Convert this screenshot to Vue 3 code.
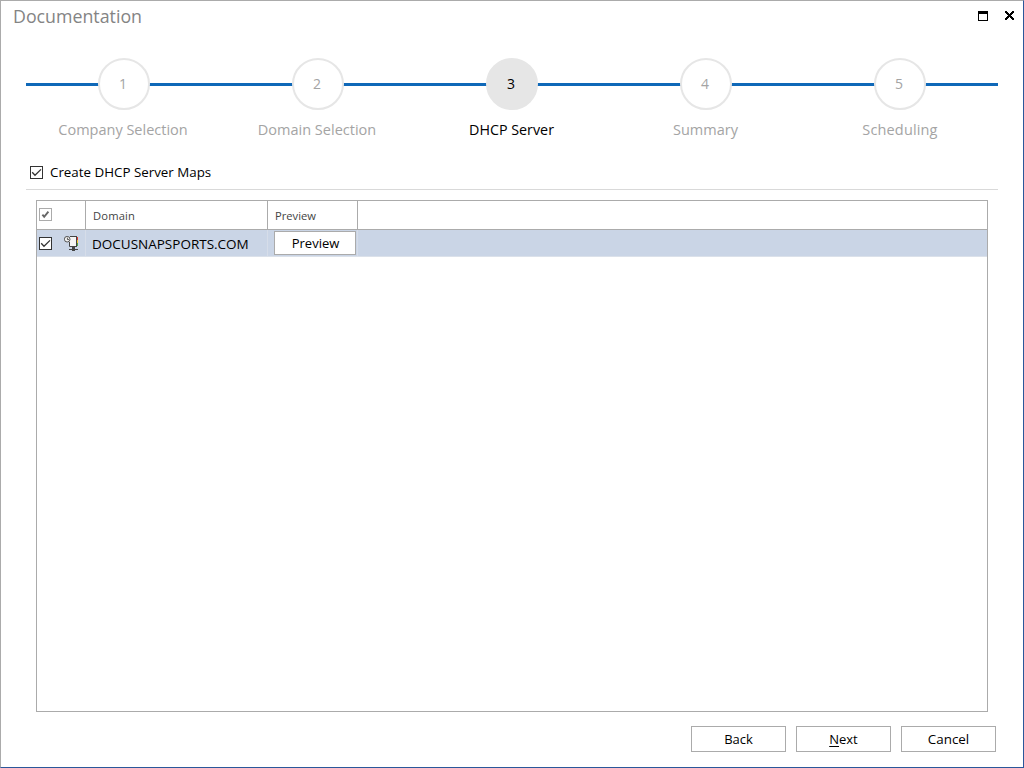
<script setup>
const steps = [
  { label: 'Company Selection', cls: 's1' },
  { label: 'Domain Selection', cls: 's2' },
  { label: 'DHCP Server', cls: 's3', active: true },
  { label: 'Summary', cls: 's4' },
  { label: 'Scheduling', cls: 's5' },
]
</script>

<template>
  <div class="window">
    <header class="titlebar">
      <span class="title">Documentation</span>
      <div class="controls">
        <svg width="10" height="10" shape-rendering="crispEdges"><path d="M0 0h10v10H0zM1 3v6h8V3z" fill="#000" fill-rule="evenodd" /></svg>
        <svg width="9" height="9" shape-rendering="crispEdges"><path d="M0 0h2v1h1v1h1v1h1V2h1V1h1V0h2v2H8v1H7v1H6v1h1v1h1v1h1v2H7V8H6V7H5V6H4v1H3v1H2v1H0V7h1V6h1V5h1V4H2V3H1V2H0z" fill="#000" /></svg>
      </div>
    </header>
    <nav class="stepper">
      <div v-for="(s, i) in steps" :key="i" class="step" :class="{ active: s.active }">
        <div class="circle"><span>{{ i + 1 }}</span></div>
        <div class="label" :class="s.cls">{{ s.label }}</div>
      </div>
    </nav>
    <label class="option">
      <svg width="13" height="13"><rect x=".5" y=".5" width="12" height="12" fill="#fff" stroke="#333" /><path d="M2.2 6.2 5 9.2 11 3.4" fill="none" stroke="#333" stroke-width="1.3" /></svg>
      <span>Create DHCP Server Maps</span>
    </label>
    <section class="table">
      <div class="row head">
        <div class="c0"><svg width="13" height="13"><rect x=".5" y=".5" width="12" height="12" fill="#fff" stroke="#ababab" /><path d="M3.4 6.6 5.2 8.8 9.4 3.6" fill="none" stroke="#666" stroke-width="1.9" /></svg></div>
        <div class="c1"><span class="h-domain">Domain</span></div>
        <div class="c2"><span>Preview</span></div>
      </div>
      <div class="row data">
        <div class="c0">
          <svg width="13" height="13"><rect x=".5" y=".5" width="12" height="12" fill="#fff" stroke="#333" /><path d="M2.2 6.2 5 9.2 11 3.4" fill="none" stroke="#333" stroke-width="1.3" /></svg>
          <svg class="server" width="15" height="16">
            <path d="M5 1h8v9H5z" fill="#f5f5f5" />
            <path d="M6 .5h7M5.5 6v4.5H13" fill="none" stroke="#444" />
            <path d="M12 0h1v11h-1z" fill="#444" />
            <path d="M13 1h1v3h-1z" fill="#e03c31" /><path d="M13 4h1v3h-1z" fill="#f2c230" /><path d="M13 7h1v3h-1z" fill="#4ea64b" />
            <circle cx="3.2" cy="3.2" r="2.8" fill="#f5f5f5" stroke="#444" stroke-width=".9" />
            <path d="M3.4 1.6v2H5" fill="none" stroke="#444" stroke-width=".9" />
            <path d="M8 11h3v2h3v1h-3v1H8v-1H5v-1h3z" fill="#444" />
          </svg>
        </div>
        <div class="c1"><span>DOCUSNAPSPORTS.COM</span></div>
        <div class="c2"><button class="preview"><span>Preview</span></button></div>
      </div>
    </section>
    <footer class="actions">
      <button><span class="back">Back</span></button>
      <button><span class="next"><u>N</u>ext</span></button>
      <button><span class="cancel">Cancel</span></button>
    </footer>
  </div>
</template>

<style>
html, body { margin: 0; background: #fff; overflow: hidden; }
</style>
<style scoped>
* { box-sizing: border-box; }
.window { width: 1024px; height: 768px; display: flex; flex-direction: column; background: #fff; border: 1px solid #ababab; border-right-color: #2b579a; border-bottom-color: #2b579a; font-family: "Open Sans", "Noto Sans", sans-serif; color: #000; font-size: 13px; }
.titlebar { height: 57px; display: flex; justify-content: space-between; padding: 3px 9px 0 12px; }
.title { font-size: 17.8px; line-height: 24px; color: #848484; }
.controls { display: flex; gap: 17px; padding-top: 7px; }
svg { display: block; flex: none; }
.stepper { height: 103px; margin: 0 25px; padding-left: 1px; display: flex; background: linear-gradient(#0f68b8, #0f68b8) 0 25px / 972px 3px no-repeat; }
.step { width: 194px; display: flex; flex-direction: column; align-items: center; color: #a4a4a4; }
.circle { width: 52px; height: 52px; border: 2px solid #e6e6e6; border-radius: 50%; background: #fff; display: flex; justify-content: center; font-size: 14px; line-height: 48px; }
.circle span { margin-right: 2px; }
.active { color: #000; }
.active .circle { background: #e6e6e6; }
.label { margin: 9px 2px 0 0; font-size: 14.5px; line-height: 22px; white-space: nowrap; }
.s3 { font-size: 14.3px; margin-right: 1px; }
.s4 { margin-right: 1px; }
.s5 { letter-spacing: .15px; margin-right: 0; }
.option { height: 29px; margin: 0 25px; padding: 0 0 5px 4px; border-bottom: 1px solid #d9d9d9; display: flex; align-items: center; gap: 7px; font-size: 13.35px; line-height: 20px; }
.option span { margin-top: -2px; }
.table { width: 952px; height: 512px; margin: 10px 0 0 35px; border: 1px solid #ababab; }
.row { display: flex; }
.head { height: 29px; border-bottom: 1px solid #ababab; font-size: 11.2px; line-height: 29px; color: #444; }
.h-domain { letter-spacing: .15px; }
.data { height: 27px; background: #cad5e6; border-bottom: 1px solid #dbe1ea; line-height: 27px; }
.c0, .c1, .c2 { border-right: 1px solid #ababab; }
.data > div { border-color: #d6dde9; }
.c0 { width: 49px; display: flex; padding: 7px 0 0 2px; }
.data .c0 { gap: 12px; }
.data .server { margin-top: -1px; }
.c1 { width: 182px; padding-left: 7px; }
.data .c1 { padding-left: 6px; font-size: 13.5px; line-height: 28px; }
.c2 { width: 90px; padding-left: 7px; }
.data .c2 { padding: 1px 0 0 6px; }
button { font: inherit; color: #000; background: #fff; border: 1px solid #ababab; padding: 0; display: block; }
.preview { width: 82px; height: 24px; line-height: 22px; padding-left: 1px; }
.actions { display: flex; gap: 10px; margin: 14px 0 0 690px; }
.actions button { width: 95px; height: 26px; line-height: 24px; }
.cancel { font-size: 13.4px; }
u { text-underline-offset: 2px; }
</style>
